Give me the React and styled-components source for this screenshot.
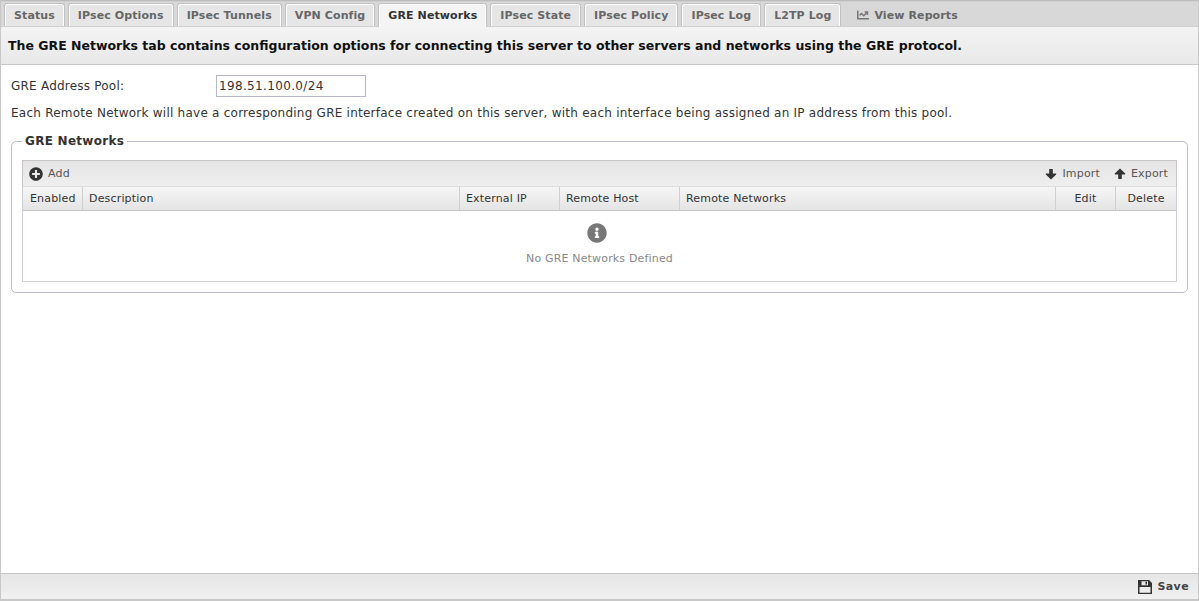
import React from 'react';
import styled, { createGlobalStyle } from 'styled-components';
import { FaPlusCircle, FaInfoCircle, FaChartLine } from 'react-icons/fa';

const GlobalStyle = createGlobalStyle`
html, body { margin: 0; padding: 0; background: #fff; }
body { font-family: "DejaVu Sans", Verdana, sans-serif; font-size: 11px; color: #333; }
* { box-sizing: border-box; }
`;

const Page = styled.div`
width: 1199px;
height: 601px;
display: flex;
flex-direction: column;
border: 1px solid #c8c8c8;
border-top: 0;
`;

const TabBar = styled.div`
height: 27px;
flex: none;
display: flex;
align-items: flex-end;
gap: 3px;
padding: 0 0 0 3px;
background: linear-gradient(#b4b4b4 0, #d8d8d8 2px, #d8d8d8 100%);
border-bottom: 1px solid #cfcfcf;
`;

const Tab = styled.div`
height: ${p => (p.$active ? '24px' : '23px')};
padding: 0 9px;
display: flex;
align-items: center;
border: 1px solid #c2c2c2;
border-bottom: 0;
border-radius: 3px 3px 0 0;
box-shadow: inset 1px 1px 0 #fff, inset -1px 0 0 #fff;
background: ${p => (p.$active ? '#f4f4f4' : '#e6e6e6')};
color: ${p => (p.$active ? '#333' : '#666')};
font-weight: bold;
letter-spacing: 0.1px;
white-space: nowrap;
margin-bottom: ${p => (p.$active ? '-1px' : '0')};
`;

const ReportLink = styled(Tab)`
background: none;
border-color: transparent;
box-shadow: none;
gap: 5px;
margin-left: 3px;
svg { font-size: 12px; color: #777; }
`;

const Intro = styled.div`
height: 38px;
flex: none;
display: flex;
align-items: center;
padding: 0 7px;
background: linear-gradient(#f4f4f4, #e8e8e8);
border-bottom: 1px solid #c8c8c8;
color: #111;
font-size: 12.5px;
font-weight: bold;
white-space: nowrap;
`;

const Body = styled.div`
flex: 1;
padding: 10px 10px 0;
`;

const PoolRow = styled.div`
display: flex;
align-items: center;
height: 22px;
`;

const PoolLabel = styled.label`
width: 205px;
font-size: 12px;
letter-spacing: 0.22px;
`;

const PoolInput = styled.input`
width: 150px;
height: 22px;
padding: 0 2px;
border: 1px solid #b6b6c8;
font: 12px "DejaVu Sans", sans-serif;
letter-spacing: 0.35px;
color: #333;
outline: none;
`;

const Hint = styled.p`
margin: 9px 0 0;
font-size: 12px;
line-height: 15px;
letter-spacing: 0.24px;
white-space: nowrap;
`;

const Group = styled.fieldset`
margin: 12px 0 0;
padding: 11px 10px 10px;
border: 1px solid #bcbccb;
border-radius: 5px;
`;

const GroupTitle = styled.legend`
padding: 0 3px;
margin-left: 0;
font-size: 12px;
font-weight: bold;
line-height: 16px;
letter-spacing: 0.28px;
`;

const Toolbar = styled.div`
height: 27px;
display: flex;
align-items: center;
justify-content: space-between;
padding: 0 8px 0 6px;
background: linear-gradient(#e4e4e4, #efefef);
border: 1px solid #c9c4c6;
border-bottom-color: #ddd;
color: #555;
`;

const ToolGroup = styled.div`
display: flex;
gap: 14px;
`;

const ToolButton = styled.div`
display: flex;
align-items: center;
gap: 5px;
letter-spacing: 0.17px;
svg { color: #333; }
`;

const AddIcon = styled(FaPlusCircle)`
font-size: 14px;
`;

const Table = styled.div`
border: 1px solid #cfcfd6;
border-top: 0;
height: 95px;
`;

const HeadRow = styled.div`
height: 24px;
display: grid;
grid-template-columns: 60px 377px 100px 120px 376px 60px 1fr;
background: linear-gradient(#f6f6f6, #e4e4e4);
border-bottom: 1px solid #c4c4c4;
`;

const HeadCell = styled.div`
display: flex;
align-items: center;
justify-content: ${p => (p.$center ? 'center' : 'flex-start')};
padding: 0 6px;
border-right: 1px solid #cfcfcf;
letter-spacing: 0.17px;
&:first-child { padding-left: 7px; }
&:last-child { border-right: 0; }
`;

const Empty = styled.div`
height: 70px;
display: flex;
flex-direction: column;
align-items: center;
padding-top: 12px;
color: #888;
letter-spacing: 0.17px;
svg { font-size: 20px; color: #777; margin: 0 5px 9px 0; }
`;

const Footer = styled.div`
height: 27px;
flex: none;
display: flex;
align-items: center;
justify-content: flex-end;
padding-right: 9px;
background: linear-gradient(#e6e6e6, #f0f0f0);
border-top: 1px solid #c8c4c6;
border-bottom: 1px solid #c8c8c8;
`;

const SaveButton = styled.div`
display: flex;
align-items: center;
gap: 5px;
font-weight: bold;
color: #444;
letter-spacing: 0.4px;
`;

const ArrowDown = () => (
	<svg width="12" height="12" viewBox="0 0 12 12" fill="currentColor">
		<path d="M4.2 1h3.6v4.6h3.4v.9L6 11.4.8 6.5v-.9h3.4z" />
	</svg>
);

const ArrowUp = () => (
	<svg width="12" height="12" viewBox="0 0 12 12" fill="currentColor">
		<path d="M4.2 11h3.6V6.4h3.4v-.9L6 .6.8 5.5v.9h3.4z" />
	</svg>
);

const SaveIcon = () => (
	<svg width="14" height="14" viewBox="0 0 14 14" fill="#333">
		<path fillRule="evenodd" d="M0 0h11l3 3v11H0zM3.5 1.2v4h6.5v-4zM7.5 1.8h1.5v2.7H7.5zM1.5 7v5.8h11V7z" />
	</svg>
);

const tabs = ['Status', 'IPsec Options', 'IPsec Tunnels', 'VPN Config', 'GRE Networks', 'IPsec State', 'IPsec Policy', 'IPsec Log', 'L2TP Log'];
const columns = [['Enabled'], ['Description'], ['External IP'], ['Remote Host'], ['Remote Networks'], ['Edit', true], ['Delete', true]];

export default function App() {
	return (
		<Page>
			<GlobalStyle />
			<TabBar>
				{tabs.map(t => <Tab key={t} $active={t === 'GRE Networks'}>{t}</Tab>)}
				<ReportLink><FaChartLine /> View Reports</ReportLink>
			</TabBar>
			<Intro>The GRE Networks tab contains configuration options for connecting this server to other servers and networks using the GRE protocol.</Intro>
			<Body>
				<PoolRow>
					<PoolLabel>GRE Address Pool:</PoolLabel>
					<PoolInput defaultValue="198.51.100.0/24" />
				</PoolRow>
				<Hint>Each Remote Network will have a corresponding GRE interface created on this server, with each interface being assigned an IP address from this pool.</Hint>
				<Group>
					<GroupTitle>GRE Networks</GroupTitle>
					<Toolbar>
						<ToolButton><AddIcon /> Add</ToolButton>
						<ToolGroup>
							<ToolButton><ArrowDown /> Import</ToolButton>
							<ToolButton><ArrowUp /> Export</ToolButton>
						</ToolGroup>
					</Toolbar>
					<Table>
						<HeadRow>
							{columns.map(([label, center]) => <HeadCell key={label} $center={center}>{label}</HeadCell>)}
						</HeadRow>
						<Empty>
							<FaInfoCircle />
							No GRE Networks Defined
						</Empty>
					</Table>
				</Group>
			</Body>
			<Footer>
				<SaveButton><SaveIcon /> Save</SaveButton>
			</Footer>
		</Page>
	);
}
